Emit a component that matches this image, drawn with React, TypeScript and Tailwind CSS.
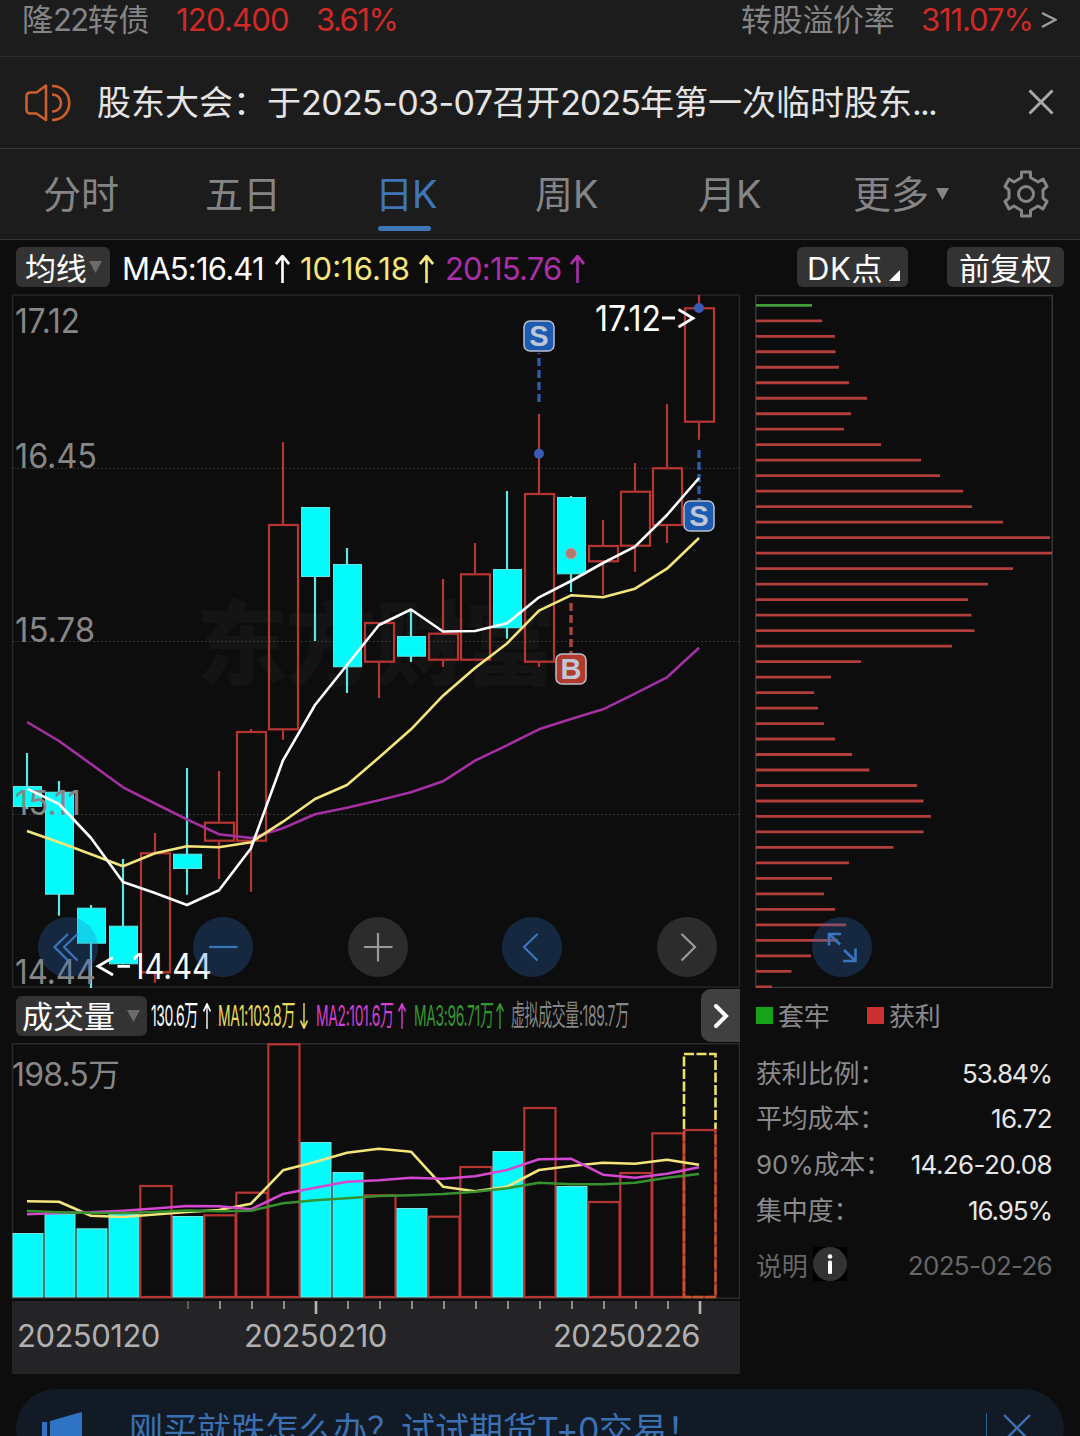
import type { ReactNode } from "react";

type Candle = { up: boolean; high: number; top: number; bottom: number; low: number };

const STEP = 32;
const cx = (i: number) => 27 + STEP * i;

const RED = "#b83632";
const CYAN = "#05fbfb";

const candles: Candle[] = [
  { up: false, high: 753, top: 786, bottom: 807, low: 809 },
  { up: false, high: 781, top: 791.7, bottom: 894.7, low: 915.7 },
  { up: false, high: 905, top: 907.7, bottom: 943.7, low: 988 },
  { up: false, high: 859, top: 925.7, bottom: 964.3, low: 964.3 },
  { up: true, high: 833, top: 852.3, bottom: 973.3, low: 982.7 },
  { up: false, high: 768, top: 853.7, bottom: 869, low: 894.7 },
  { up: true, high: 771, top: 821.7, bottom: 841.7, low: 879 },
  { up: true, high: 729, top: 731, bottom: 841.7, low: 891.7 },
  { up: true, high: 442.3, top: 524, bottom: 730.3, low: 739.7 },
  { up: false, high: 507, top: 507, bottom: 577, low: 641 },
  { up: false, high: 548, top: 564, bottom: 667.3, low: 693 },
  { up: true, high: 622, top: 622, bottom: 662.7, low: 698 },
  { up: false, high: 610, top: 636, bottom: 656.7, low: 662 },
  { up: true, high: 579, top: 632.7, bottom: 660.7, low: 667 },
  { up: true, high: 543, top: 573.3, bottom: 660.7, low: 660.7 },
  { up: false, high: 491, top: 569, bottom: 628.3, low: 638.7 },
  { up: true, high: 414, top: 493, bottom: 662.7, low: 667 },
  { up: false, high: 496, top: 497, bottom: 574.3, low: 592 },
  { up: true, high: 520, top: 545, bottom: 562.3, low: 594.7 },
  { up: true, high: 463, top: 490.7, bottom: 546.7, low: 571.7 },
  { up: true, high: 404, top: 467.3, bottom: 526, low: 543 },
  { up: true, high: 295, top: 307.3, bottom: 422.7, low: 439.7 },
];

const ma5 = [788.7, 804, 838, 882, 893, 905, 890.3, 848.3, 760.3, 705, 665, 625, 609.5, 631.5, 631, 623.3, 597.3, 581, 563, 546.7, 515, 478];
const ma10 = [831, 842.3, 854.3, 866.3, 853.3, 846.3, 847.3, 842.3, 821.7, 799, 785, 757.5, 729.3, 695.7, 668, 643.5, 610.7, 595.3, 597.3, 588.7, 568.7, 538];
const ma20 = [722, 741, 764, 787.3, 803.5, 819.3, 834.3, 838, 828.3, 814.3, 807.7, 800.3, 792.3, 781.3, 760.7, 745.3, 729.3, 719, 709.3, 693.7, 677.3, 647.7];

const volumeTops = [1233, 1213.7, 1228.3, 1213.7, 1185, 1216, 1214.3, 1191.7, 1043.3, 1142, 1172, 1194.3, 1208, 1215.7, 1166, 1151, 1107, 1186, 1201, 1172, 1132.3, 1129];
const vma1 = [1201.3, 1201.7, 1215.7, 1217, 1214.5, 1212, 1210, 1203.7, 1170.3, 1162, 1152.7, 1148.8, 1151.7, 1186.7, 1191.3, 1186.7, 1170, 1166, 1162.7, 1163.7, 1159.7, 1164.7];
const vma2 = [1214.3, 1213, 1212.3, 1210.7, 1208.5, 1206, 1206.3, 1209.3, 1194, 1187.7, 1181.7, 1180.3, 1177.7, 1178.7, 1176.3, 1170, 1159.3, 1158.7, 1174.7, 1177.7, 1173.7, 1167.3];
const vma3 = [1211, 1212.3, 1213, 1213, 1212, 1210.5, 1211.3, 1210.7, 1203.3, 1200.3, 1198.3, 1196, 1195.3, 1194, 1191.7, 1188.3, 1182.7, 1184.3, 1184.3, 1182.7, 1177.7, 1174];

const chips = [
  812, 822, 835, 835.5, 839, 849, 867, 851, 844, 881, 921, 940, 963, 972, 1003, 1050, 1052, 1013, 988, 968, 971.5, 974.5,
  952, 861, 831, 814, 818, 824, 835, 852, 869.5, 917, 923.5, 931, 923.5, 893.5, 849, 832, 824, 835, 846, 838, 811, 791.5, 772,
];

const priceLabels = [
  { text: "17.12", y: 333, width: 65 },
  { text: "16.45", y: 468, width: 82 },
  { text: "15.78", y: 642, width: 80 },
  { text: "15.11", y: 815, width: 66 },
  { text: "14.44", y: 984, width: 81 },
];

const points = (ys: number[]) => ys.map((y, i) => `${cx(i)},${y}`).join(" ");

function Arrow({ className, down = false }: { className: string; down?: boolean }) {
  return (
    <svg viewBox="0 0 16 28" preserveAspectRatio="none" className={className} fill="none" stroke="currentColor" strokeWidth="2.8">
      <path d={down ? "M8 0V27M1 19l7 8 7-8" : "M8 28V1M1 9l7-8 7 8"} />
    </svg>
  );
}

function Badge({ x, y, label, fill }: { x: number; y: number; label: string; fill: string }) {
  return (
    <g>
      <rect x={x - 15} y={y - 15} width="30" height="30" rx="6" fill={fill} stroke="#b9c0cf" strokeWidth="1.5" />
      <text x={x} y={y + 10} textAnchor="middle" fontSize="29" fontWeight="700" fill="#c0c8d8" fontFamily="Liberation Sans, sans-serif">
        {label}
      </text>
    </g>
  );
}

function PriceChart() {
  return (
    <svg width="740" height="694" viewBox="0 294 740 694" className="block overflow-visible">
      <rect x="12.5" y="295" width="727" height="692" fill="none" stroke="#262626" strokeWidth="1.5" />
      <text x="196" y="678" fontSize="92" fontWeight="900" fill="#141414" textLength="360">
        东方财富
      </text>
      {[468.3, 641.5, 814.5].map((y) => (
        <line key={y} x1="13" x2="739" y1={y} y2={y} stroke="#363636" strokeDasharray="2 2" />
      ))}

      {candles.map((c, i) =>
        c.up ? (
          <g key={i} stroke={RED} strokeWidth="2.2" fill="none">
            <path d={`M${cx(i)} ${c.high}V${c.top}M${cx(i)} ${c.bottom}V${c.low}`} />
            <rect x={cx(i) - 14} y={c.top + 1} width="29" height={c.bottom - c.top - 2} />
          </g>
        ) : (
          <g key={i}>
            <line x1={cx(i)} x2={cx(i)} y1={c.high} y2={c.low} stroke="#5fe6e4" strokeWidth="2.2" />
            <rect x={cx(i) - 13.5} y={c.top + 0.5} width="28" height={c.bottom - c.top - 1} fill={CYAN} stroke="#5fe6e4" />
          </g>
        )
      )}

      <g fontSize="34" fill="#868686">
        {priceLabels.map((l) => (
          <text key={l.text} x="15" y={l.y} textLength={l.width} lengthAdjust="spacingAndGlyphs">
            {l.text}
          </text>
        ))}
      </g>

      <g fill="none" strokeWidth="2.6" strokeLinejoin="round">
        <line x1="539" x2="539" y1="353" y2="402" stroke="#2a5da6" strokeWidth="3.4" strokeDasharray="8 4" strokeDashoffset="7" />
        <line x1="699" x2="699" y1="450" y2="500" stroke="#2a5da6" strokeWidth="3.4" strokeDasharray="8 4" />
        <line x1="571" x2="571" y1="603" y2="654" stroke="#a8463a" strokeWidth="3.4" strokeDasharray="8 4" />
        <polyline points={points(ma20)} stroke="#a62fa3" />
        <polyline points={points(ma10)} stroke="#f5e67c" />
        <polyline points={points(ma5)} stroke="#ffffff" />
      </g>

      <circle cx="539" cy="453.7" r="5" fill="#3a5bb5" />
      <circle cx="699" cy="308" r="5" fill="#3a5bb5" />
      <circle cx="571" cy="553.5" r="5.3" fill="#b07a6c" stroke="#d79a8c" />
      <Badge x={539} y={336} label="S" fill="#1c5bb0" />
      <Badge x={699} y={516} label="S" fill="#1c5bb0" />
      <Badge x={571} y={669} label="B" fill="#b23a2c" />

      <g fontSize="35" fill="#ffffff">
        <text x="595" y="331" textLength="66" lengthAdjust="spacingAndGlyphs">17.12</text>
        <text x="132" y="979" textLength="80" lengthAdjust="spacingAndGlyphs">14.44</text>
      </g>
      <g stroke="#ffffff" fill="none" strokeWidth="2.8">
        <path d="M662 318h13M678.5 309.5L693 318.2L678.5 327" />
        <path d="M113 957.5L98 966.3L113 975M117.5 966.3h12.5" />
      </g>
    </svg>
  );
}

function VolumeChart() {
  return (
    <svg width="740" height="258" viewBox="0 1043 740 258" className="block">
      <rect x="12.5" y="1043.7" width="727" height="254.5" fill="none" stroke="#2b2b2b" strokeWidth="1.5" />
      <text x="12" y="1086" fontSize="32" fill="#868686" textLength="108">
        198.5万
      </text>
      {volumeTops.map((top, i) =>
        candles[i].up ? (
          <rect key={i} x={12.3 + STEP * i} y={top + 1} width="31.2" height={1296 - top} fill="none" stroke={RED} strokeWidth="2.2" />
        ) : (
          <rect key={i} x={13 + STEP * i} y={top + 0.5} width="30" height={1296.5 - top} fill={CYAN} stroke="#7be3e0" />
        )
      )}
      <path d="M684 1129V1054H715.5V1129" fill="none" stroke="#efe06a" strokeWidth="2.6" strokeDasharray="10 2.5" />
      <path d="M684 1131V1297H715.5V1131" fill="none" stroke="#c0562f" strokeWidth="2.4" strokeDasharray="10 2.5" />
      <g fill="none" strokeWidth="2.6" strokeLinejoin="round">
        <polyline points={points(vma1)} stroke="#f5e67c" />
        <polyline points={points(vma2)} stroke="#d447d0" />
        <polyline points={points(vma3)} stroke="#37912f" />
      </g>
    </svg>
  );
}

function DateAxis() {
  return (
    <div className="ml-3 h-[73px] bg-[#242426] text-[31px] leading-none text-[#b0b0b0]">
      <svg width="728" height="14" viewBox="12 0 728 14" className="block">
        {Array.from({ length: 17 }, (_, n) => {
          const major = n === 4 || n === 16;
          return (
            <line
              key={n}
              x1={188 + STEP * n}
              x2={188 + STEP * n}
              y1="0"
              y2={major ? 13 : 8}
              stroke={n === 0 ? "#5c5c5c" : major ? "#b5b5b5" : "#8c8c8c"}
              strokeWidth={major ? 2.6 : 2}
            />
          );
        })}
      </svg>
      <div className="flex pt-[5px] pl-[5px]">
        <span className="w-[227px] tracking-[-0.5px]">20250120</span>
        <span className="w-[309px] tracking-[-0.5px]">20250210</span>
        <span className="tracking-[-0.75px]">20250226</span>
      </div>
    </div>
  );
}

function ChipChart() {
  return (
    <svg width="340" height="694" viewBox="740 294 340 694" className="block">
      <rect x="755.8" y="295.5" width="296.4" height="692" fill="none" stroke="#383838" strokeWidth="1.5" />
      {chips.map((end, i) => (
        <line key={i} x1="756" x2={end} y1={305.3 + 15.49 * i} y2={305.3 + 15.49 * i} stroke={i === 0 ? "#429a3a" : "#b23f3c"} strokeWidth="2.8" />
      ))}
    </svg>
  );
}

function Indicator({ className, children }: { className: string; children: ReactNode }) {
  return (
    <div className={className}>
      <span className="inline-block origin-left scale-x-[0.48] tracking-[-0.7px] whitespace-nowrap">{children}</span>
    </div>
  );
}

function RoundButton({ blue = false, children }: { blue?: boolean; children: ReactNode }) {
  return (
    <button
      className={
        blue
          ? "flex size-[60px] items-center justify-center rounded-full bg-[#2f70c4]/28 text-[#3a76bd]"
          : "flex size-[60px] items-center justify-center rounded-full bg-[#8c8c8c]/25 text-[#9a9a9a]"
      }
    >
      <svg width="60" height="60" viewBox="0 0 60 60" fill="none" stroke="currentColor" strokeWidth="2.2">
        {children}
      </svg>
    </button>
  );
}

function Stat({ label, children }: { label: string; children: ReactNode }) {
  return (
    <div className="flex h-[45.6px] items-center justify-between text-[26px]">
      <span className="tracking-[-0.2px] text-[#8a8a8c]">{label}</span>
      {children}
    </div>
  );
}

export default function App() {
  return (
    <main className="flex h-[1436px] w-[1080px] flex-col overflow-hidden bg-[#0d0d0d] font-[Inter,'Noto_Sans_CJK_SC',sans-serif] leading-none">
      <section className="flex h-[57px] shrink-0 items-start border-b border-[#2a2a2a] bg-[#1c1c1c] pt-[4px] pl-[22px] text-[31px] whitespace-nowrap text-[#858587]">
        <span className="w-[154px]">
          隆<span className="tracking-[-1.6px]">22</span>转债
        </span>
        <span className="w-[140px] tracking-[-0.8px] text-[#cf2a26]">120.400</span>
        <span className="w-[425px] tracking-[-1.5px] text-[#cf2a26]">3.61%</span>
        <span className="w-[180px] tracking-[-0.3px]">转股溢价率</span>
        <span className="w-[120px] tracking-[-1.1px] text-[#cf2a26]">311.07%</span>
        <svg width="16" height="16" viewBox="0 0 16 16" className="mt-[8px]" fill="none" stroke="#a0a0a0" strokeWidth="2.2">
          <path d="M1 1l13.500 6.800L1 15" />
        </svg>
      </section>

      <section className="flex h-[92px] shrink-0 items-center border-b border-[#363636] bg-[#1c1c1c] pl-[25px]">
        <svg width="46" height="40" viewBox="0 0 46 40" className="mr-[26px] shrink-0" fill="none" stroke="#cc5f2c" strokeWidth="2.6" strokeLinejoin="round">
          <path d="M21 2.500V37L11.500 30.500H5.500Q1.500 30.500 1.500 26.500V13.500Q1.500 9.500 5.500 9.500H11.500Z" />
          <path d="M27 3c23 0 23 34 0 34M27 11.500c12 0 12 17 0 17" />
        </svg>
        <p className="w-[931px] text-[34px] whitespace-nowrap text-[#e4e4e4]">
          股东大会：于<span className="tracking-[-0.6px]">2025-03-07</span>召开<span className="tracking-[-1px]">2025</span>年第一次临时股东
          <span className="tracking-[-1.8px]">...</span>
        </p>
        <svg width="26" height="26" viewBox="0 0 26 26" className="-mt-px shrink-0" stroke="#a8a8a8" strokeWidth="3">
          <path d="M1.500 1.500l23 23M24.500 1.500l-23 23" />
        </svg>
      </section>

      <nav className="grid h-[91px] shrink-0 grid-cols-[162px_172px_158px_163px_155px_150px_1fr] items-center border-b border-[#363636] bg-[#1c1c1c] pl-[43px] text-[38px] text-[#858587]">
        <span>分时</span>
        <span>五日</span>
        <span className="relative text-[#3f76b8]">
          <span className="-ml-[2px] tracking-[-1px]">日K</span>
          <i className="absolute top-[51px] left-px h-[5px] w-[53px] rounded-full bg-[#3f76b8]" />
        </span>
        <span>周K</span>
        <span>月K</span>
        <span className="flex items-center gap-[7px]">
          更多
          <svg width="13" height="12" viewBox="0 0 13 12" fill="currentColor">
            <path d="M0 0h13L6.500 12z" />
          </svg>
        </span>
        <svg width="46" height="48" viewBox="0 0 46 48" fill="none" stroke="currentColor" strokeWidth="3" strokeLinejoin="round">
          <path d="M18.500 2h9v5.500l7.500 4.500 5-3 4 7.500-4 3.500v8l4 3.500-4 7.500-5-3-7.500 4.500V46h-9v-5.500L11 36l-5 3-4-7.500L6 28v-8l-4-3.500L6 9l5 3 7.500-4.500z" />
          <circle cx="23" cy="24" r="7.500" />
        </svg>
      </nav>

      <section className="flex h-[54px] shrink-0 items-start pt-[7px] pl-4 text-[31px] whitespace-nowrap text-white">
        <button className="mr-[12px] flex h-10 w-[94px] items-center gap-[3px] rounded-md bg-[#333333] pl-[9px]">
          <span className="pt-[2px] tracking-[-0.3px]">均线</span>
          <svg width="13" height="12" viewBox="0 0 13 12" fill="#6b6b6b">
            <path d="M0 0h13L6.500 12z" />
          </svg>
        </button>
        <div className="flex h-[43px] w-[178px] items-center">
          <span className="w-[153px] tracking-[-0.8px]">MA5:16.41</span>
          <Arrow className="h-7 w-[15px]" />
        </div>
        <div className="flex h-[43px] w-[145px] items-center text-[#f5e67c]">
          <span className="w-[119px]">10:16.18</span>
          <Arrow className="h-7 w-[15px]" />
        </div>
        <div className="flex h-[43px] w-[352px] items-center text-[#ab2fa8]">
          <span className="w-[125px] tracking-[-0.8px]">20:15.76</span>
          <Arrow className="h-7 w-[15px]" />
        </div>
        <button className="mr-[39px] flex h-10 w-[111px] items-center rounded-md bg-[#333333] pl-[10px]">
          <span className="pt-[2px] tracking-[0.6px]">DK点</span>
          <svg width="11" height="11" viewBox="0 0 11 11" className="mt-[17px] ml-[6px] shrink-0" fill="#ffffff">
            <path d="M11 0v11H0z" />
          </svg>
        </button>
        <button className="flex h-10 w-[117px] items-center justify-center rounded-md bg-[#333333] pt-[2px]">前复权</button>
      </section>

      <div className="relative flex shrink-0">
        <div className="w-[740px]">
          <PriceChart />

          <div className="flex h-[55px] items-center pl-4 text-[29px] text-white">
            <button className="mr-[4px] flex h-10 w-[131px] shrink-0 items-center gap-[12px] rounded-md bg-[#333333] pl-[6px] text-[31px] whitespace-nowrap">
              <span className="pt-[2px]">成交量</span>
              <svg width="13" height="12" viewBox="0 0 13 12" fill="#6b6b6b">
                <path d="M0 0h13L6.500 12z" />
              </svg>
            </button>
            <Indicator className="w-[52px]">130.6万</Indicator>
            <Arrow className="mr-[7px] h-[26px] w-[8px] shrink-0" />
            <Indicator className="w-[82px] text-[#e8dc5c]">MA1:103.8万</Indicator>
            <Arrow className="mr-[8px] h-[26px] w-[8px] shrink-0 text-[#e8dc5c]" down />
            <Indicator className="w-[82px] text-[#d33fd0]">MA2:101.6万</Indicator>
            <Arrow className="mr-[8px] h-[26px] w-[8px] shrink-0 text-[#d33fd0]" />
            <Indicator className="w-[82px] text-[#37952f]">MA3:96.71万</Indicator>
            <Arrow className="mr-[7px] h-[26px] w-[8px] shrink-0 text-[#37952f]" />
            <Indicator className="w-[190px] text-[#858585]">虚拟成交量:189.7万</Indicator>
            <button className="ml-auto flex h-[53px] w-[39px] shrink-0 items-center justify-center rounded-l-[10px] bg-[#404040]">
              <svg width="16" height="26" viewBox="0 0 16 26" fill="none" stroke="#ffffff" strokeWidth="4" strokeLinecap="round">
                <path d="M3 3l10 10L3 23" />
              </svg>
            </button>
          </div>

          <VolumeChart />
          <DateAxis />
        </div>

        <div className="w-[340px]">
          <ChipChart />
          <div className="flex h-[55px] items-center pl-4 text-[26px] text-[#8a8a8c]">
            <i className="mr-[5px] size-[17px] bg-[#17a317]" />
            <span className="w-[89px] pt-[2px] tracking-[-0.3px]">套牢</span>
            <i className="mr-[5px] size-[17px] bg-[#cc3030]" />
            <span className="pt-[2px] tracking-[-0.3px]">获利</span>
          </div>
          <div className="mt-[8px] w-[312px] pl-4 text-[#e6e6e6]">
            <Stat label="获利比例：">
              <span className="tracking-[-1.1px]">53.84%</span>
            </Stat>
            <Stat label="平均成本：">
              <span className="tracking-[-0.5px]">16.72</span>
            </Stat>
            <Stat label="90%成本：">
              <span className="tracking-[-0.6px]">14.26-20.08</span>
            </Stat>
            <Stat label="集中度：">
              <span className="tracking-[-1.1px]">16.95%</span>
            </Stat>
          </div>
          <div className="mt-[14px] flex w-[312px] items-center pl-4 text-[26px] text-[#666668]">
            <span className="mr-[6px] pt-[5px] tracking-[-0.3px]">说明</span>
            <span className="flex size-[34px] items-center justify-center bg-black">
              <svg width="34" height="34" viewBox="0 0 34 34">
                <circle cx="17" cy="17" r="17" fill="#333333" />
                <circle cx="17" cy="9.500" r="2.300" fill="#ffffff" />
                <rect x="15" y="13.500" width="4" height="13.500" rx="1.500" fill="#ffffff" />
              </svg>
            </span>
            <span className="ml-auto pt-[4px] tracking-[-0.7px]">2025-02-26</span>
          </div>
        </div>

        <div className="absolute top-[623px] left-[38px] flex w-[834px] justify-between">
          <RoundButton blue>
            <path d="M30 17L16.500 30L30 43.500M39.500 17L26 30L39.500 43.500" />
          </RoundButton>
          <RoundButton blue>
            <path d="M16 30h28.500" />
          </RoundButton>
          <RoundButton>
            <path d="M16 30h28.500M30 16v28.500" />
          </RoundButton>
          <RoundButton blue>
            <path d="M35.500 17L22 30L35.500 43.500" />
          </RoundButton>
          <RoundButton>
            <path d="M24.500 17L38 30L24.500 43.500" />
          </RoundButton>
          <RoundButton blue>
            <path strokeWidth="2.600" d="M28 27.500L17 17M17 28.500V17H29M32 33l11.500 11M43.500 31.500V44H31" />
          </RoundButton>
        </div>
      </div>

      <section className="mx-4 mt-[15px] flex h-[80px] shrink-0 items-start rounded-[40px] bg-[#121a25] text-[34px] whitespace-nowrap text-[#3b70b3]">
        <svg width="40" height="40" viewBox="0 0 40 40" className="mt-[23px] ml-[26px] shrink-0" fill="#2f74c4">
          <path d="M0 10h5v20H0zM8 9L36 1l4-1v40H8z" />
        </svg>
        <span className="mt-[24px] ml-[47px] w-[857px]">
          刚买就跌怎么办？试试期货<span className="tracking-[-0.5px]">T+0</span>交易！
        </span>
        <i className="mt-[24px] h-[40px] w-px bg-[#2f5f9a]" />
        <svg width="28" height="28" viewBox="0 0 28 28" className="mt-[25px] ml-[16px]" stroke="#3b70b3" strokeWidth="2.400">
          <path d="M1 1l26 26M27 1L1 27" />
        </svg>
      </section>
    </main>
  );
}
